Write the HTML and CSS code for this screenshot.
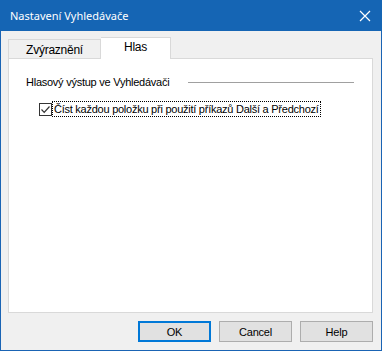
FILE: index.html
```html
<!DOCTYPE html>
<html lang="cs">
<head>
  <meta charset="UTF-8" />
  <title>Nastavení Vyhledávače</title>
  <link rel="stylesheet" href="styles.css">
</head>
<body>
<div class="window">
  <div class="titlebar">
    <span class="title">Nastavení Vyhledávače</span>
    <svg class="close" width="12" height="12" viewBox="0 0 12 12">
      <path d="M1 1 L11 11 M11 1 L1 11" stroke="#fff" stroke-width="1.2"/>
    </svg>
  </div>

  <div class="client">
    <div class="tabs">
      <div class="tab">Zvýraznění</div>
      <div class="tab active">Hlas</div>
    </div>

    <div class="panel">
      <div class="group-head">
        <span>Hlasový výstup ve Vyhledávači</span>
        <span class="rule"></span>
      </div>
      <label class="check">
        <span class="box">
          <svg width="11" height="11" viewBox="0 0 11 11">
            <path d="M1.5 5.5 L4.2 8.3 L9.5 2.5" fill="none" stroke="#333" stroke-width="1.2"/>
          </svg>
        </span>
        <span class="check-text">Číst každou položku při použití příkazů Další a Předchozí</span>
      </label>
    </div>

    <div class="buttons">
      <button class="btn default">OK</button>
      <button class="btn">Cancel</button>
      <button class="btn">Help</button>
    </div>
  </div>
</div>
</body>
</html>
```

FILE: styles.css
```css
* {
  margin: 0;
  padding: 0;
  box-sizing: border-box;
}

html, body {
  width: 382px;
  height: 351px;
  overflow: hidden;
  font-family: 'Liberation Sans', Arial, sans-serif;
  font-size: 11px;
  letter-spacing: -0.25px;
  color: #000;
  background: #f0f0f0;
}

/* Dialogfenster */
.window {
  width: 382px;
  height: 351px;
  border: 1px solid #1a64b4;
  border-top: none;
  background: #f0f0f0;
  display: flex;
  flex-direction: column;
}

.titlebar {
  height: 31px;
  margin: 0 -1px;
  background: #1565b4;
  color: #fff;
  display: flex;
  align-items: center;
  justify-content: space-between;
  padding: 0 10px 0 10px;
}

.title {
  font-family: 'Noto Sans', sans-serif;
  font-size: 11px;
  letter-spacing: 0;
}

.close {
  margin-right: 1px;
}

.client {
  flex: 1;
  display: flex;
  flex-direction: column;
  padding: 6px 8px 0 7px;
}

/* Reiter */
.tabs {
  display: flex;
  align-items: flex-end;
  height: 21px;
  position: relative;
  z-index: 1;
}

.tab {
  height: 19px;
  width: 93px;
  border: 1px solid #d9d9d9;
  border-bottom: none;
  background: #f0f0f0;
  text-align: center;
  line-height: 19px;
  padding-top: 1px;
  font-size: 12px;
}

.tab.active {
  height: 22px;
  width: 70px;
  margin-bottom: -1px;
  background: #fff;
  border-left: none;
  line-height: 18px;
  padding-top: 0;
}

.panel {
  height: 255px;
  background: #fff;
  border: 1px solid #d9d9d9;
  padding: 17px 16px 0 17px;
}

.group-head {
  display: flex;
  align-items: center;
  gap: 19px;
  padding-right: 2px;
  white-space: nowrap;
}

.rule {
  flex: 1;
  height: 1px;
  background: #a0a0a0;
  margin-top: 1px;
}

.check {
  display: flex;
  align-items: center;
  margin-top: 14px;
  margin-left: 13px;
  white-space: nowrap;
}

.box {
  width: 13px;
  height: 13px;
  border: 1px solid #333;
  display: flex;
  align-items: center;
  justify-content: center;
  background: #fff;
}

.check-text {
  margin-left: 1px;
  outline: 1px dotted #000;
  padding: 0 1px;
  line-height: 14px;
}

/* Schaltflächen */
.buttons {
  display: flex;
  justify-content: flex-end;
  gap: 8px;
  margin-top: 8px;
}

.btn {
  width: 73px;
  height: 21px;
  font-family: 'Liberation Sans', Arial, sans-serif;
  font-size: 11px;
  letter-spacing: -0.2px;
  background: #e1e1e1;
  border: 1px solid #adadad;
  color: #000;
}

.btn.default {
  border: 2px solid #0078d7;
}
```
